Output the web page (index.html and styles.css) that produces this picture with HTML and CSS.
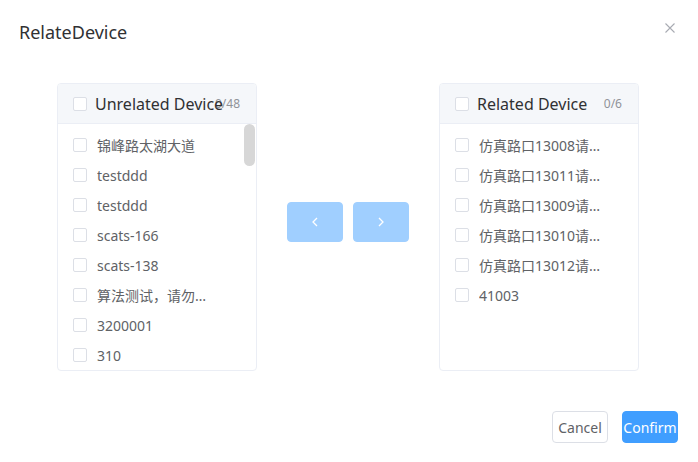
FILE: index.html
```html
<!DOCTYPE html>
<html lang="en">
<head>
    <meta charset="UTF-8">
    <meta name="viewport" content="width=device-width, initial-scale=1.0">
    <title>RelateDevice</title>
    <link rel="stylesheet" href="styles.css">
</head>
<body>
    <div class="dialog">
        <header class="dialog-header">
            <span class="dialog-title">RelateDevice</span>
            <button class="dialog-close" aria-label="Close">
                <svg width="10" height="10" viewBox="0 0 10 10">
                    <path d="M0.5 0.5 L9.5 9.5 M9.5 0.5 L0.5 9.5" stroke="#a8abb2" stroke-width="1.1" fill="none"/>
                </svg>
            </button>
        </header>

        <main class="dialog-body">
            <div class="transfer">
                <section class="panel panel-scroll">
                    <div class="panel-header">
                        <span class="checkbox"></span>
                        <span class="panel-title">Unrelated Device</span>
                        <span class="panel-count">0/48</span>
                    </div>
                    <div class="panel-body">
                        <ul class="panel-list">
                            <li class="item"><span class="checkbox"></span><span class="label">锦峰路太湖大道</span></li>
                            <li class="item"><span class="checkbox"></span><span class="label">testddd</span></li>
                            <li class="item"><span class="checkbox"></span><span class="label">testddd</span></li>
                            <li class="item"><span class="checkbox"></span><span class="label">scats-166</span></li>
                            <li class="item"><span class="checkbox"></span><span class="label">scats-138</span></li>
                            <li class="item"><span class="checkbox"></span><span class="label">算法测试，请勿删除设备</span></li>
                            <li class="item"><span class="checkbox"></span><span class="label">3200001</span></li>
                            <li class="item"><span class="checkbox"></span><span class="label">310</span></li>
                        </ul>
                        <div class="scroll-thumb"></div>
                    </div>
                </section>

                <div class="transfer-buttons">
                    <button class="move-btn" disabled>
                        <svg width="8" height="10" viewBox="0 0 8 10"><path d="M6 1 L2 5 L6 9" stroke="#fff" stroke-width="1.3" fill="none"/></svg>
                    </button>
                    <button class="move-btn" disabled>
                        <svg width="8" height="10" viewBox="0 0 8 10"><path d="M2 1 L6 5 L2 9" stroke="#fff" stroke-width="1.3" fill="none"/></svg>
                    </button>
                </div>

                <section class="panel">
                    <div class="panel-header">
                        <span class="checkbox"></span>
                        <span class="panel-title">Related Device</span>
                        <span class="panel-count">0/6</span>
                    </div>
                    <div class="panel-body">
                        <ul class="panel-list">
                            <li class="item"><span class="checkbox"></span><span class="label">仿真路口13008请勿删除</span></li>
                            <li class="item"><span class="checkbox"></span><span class="label">仿真路口13011请勿删除</span></li>
                            <li class="item"><span class="checkbox"></span><span class="label">仿真路口13009请勿删除</span></li>
                            <li class="item"><span class="checkbox"></span><span class="label">仿真路口13010请勿删除</span></li>
                            <li class="item"><span class="checkbox"></span><span class="label">仿真路口13012请勿删除</span></li>
                            <li class="item"><span class="checkbox"></span><span class="label">41003</span></li>
                        </ul>
                    </div>
                </section>
            </div>
        </main>

        <footer class="dialog-footer">
            <button class="btn btn-default">Cancel</button>
            <button class="btn btn-primary">Confirm</button>
        </footer>
    </div>
</body>
</html>
```

FILE: styles.css
```css
* {
    margin: 0;
    padding: 0;
    box-sizing: border-box;
}

body {
    font-family: 'Noto Sans', 'Noto Sans CJK SC', sans-serif;
    background: #fff;
    color: #606266;
}

.dialog {
    width: 698px;
    height: 462px;
    background: #fff;
}

.dialog-header {
    position: relative;
    padding: 20px 20px 10px 19px;
}

.dialog-title {
    display: block;
    font-size: 18px;
    line-height: 24px;
    color: #303133;
}

.dialog-close {
    position: absolute;
    top: 23px;
    right: 23px;
    width: 10px;
    height: 10px;
    border: none;
    background: none;
    display: flex;
}

.dialog-body {
    padding: 29px 21px 30px 19px;
}

.transfer {
    display: flex;
    justify-content: center;
    align-items: center;
}

.panel {
    width: 200px;
    height: 288px;
    border: 1px solid #ebeef5;
    border-radius: 4px;
    overflow: hidden;
    background: #fff;
}

.panel-header {
    position: relative;
    display: flex;
    align-items: center;
    gap: 8px;
    height: 40px;
    padding-left: 15px;
    background: #f5f7fa;
    border-bottom: 1px solid #ebeef5;
}

.panel-title {
    font-size: 16px;
    color: #303133;
    white-space: nowrap;
    position: relative;
    z-index: 1;
}

.panel-count {
    position: absolute;
    right: 16px;
    top: 0;
    line-height: 39px;
    font-size: 12px;
    color: #909399;
}

.checkbox {
    flex: none;
    width: 14px;
    height: 14px;
    border: 1px solid #dcdfe6;
    border-radius: 2px;
    background: #fff;
}

.panel-body {
    position: relative;
    height: 246px;
    overflow: hidden;
}

.panel-list {
    list-style: none;
    padding: 6px 0;
}

.item {
    display: flex;
    align-items: center;
    gap: 10px;
    height: 30px;
    padding-left: 15px;
    font-size: 14px;
}

.label {
    width: 124px;
    white-space: nowrap;
    overflow: hidden;
    text-overflow: ellipsis;
    color: #606266;
}

.panel-scroll .label {
    width: 116px;
}

.scroll-thumb {
    position: absolute;
    top: 0;
    right: 1px;
    width: 11px;
    height: 42px;
    border-radius: 6px;
    background: #d7d7d7;
}

.transfer-buttons {
    display: flex;
    gap: 10px;
    padding: 0 30px;
    margin-bottom: 10px;
}

.move-btn {
    width: 56px;
    height: 40px;
    border: 1px solid #a0cfff;
    border-radius: 4px;
    background: #a0cfff;
    display: flex;
    align-items: center;
    justify-content: center;
}

.dialog-footer {
    display: flex;
    justify-content: flex-end;
    gap: 14px;
    padding: 10px 20px 20px;
}

.btn {
    width: 56px;
    height: 32px;
    padding: 0;
    border-radius: 4px;
    font-family: inherit;
    font-size: 14px;
    display: flex;
    align-items: center;
    justify-content: center;
    white-space: nowrap;
}

.btn-default {
    background: #fff;
    border: 1px solid #dcdfe6;
    color: #606266;
}

.btn-primary {
    background: #409eff;
    border: 1px solid #409eff;
    color: #fff;
}
```
